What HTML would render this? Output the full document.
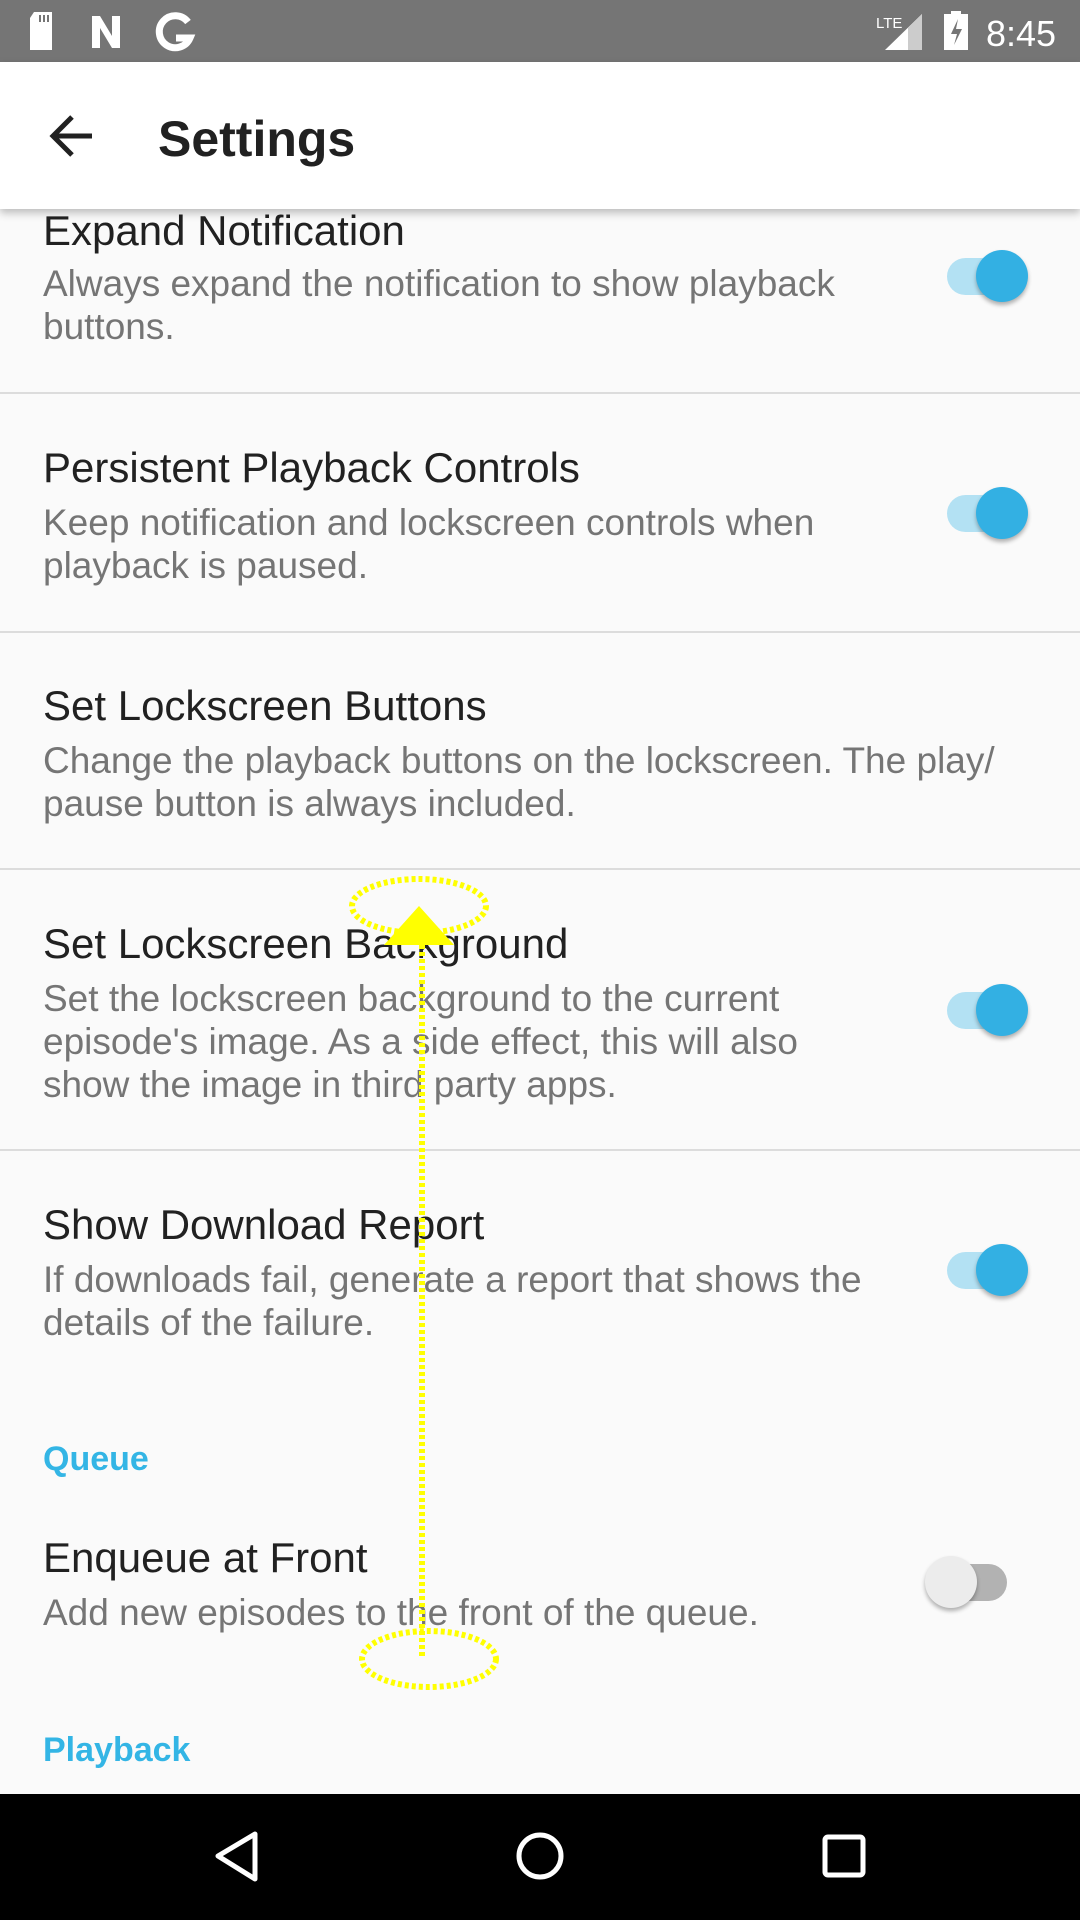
<!DOCTYPE html>
<html><head><meta charset="utf-8"><style>
*{margin:0;padding:0;box-sizing:border-box}
body{width:1080px;height:1920px;position:relative;overflow:hidden;background:#fafafa;font-family:"Liberation Sans",sans-serif}
.a{position:absolute;white-space:nowrap}
.t{font-size:42px;line-height:42px;color:#212121;left:43px}
.s{font-size:37px;line-height:43px;color:#757575;left:43px}
.h{font-size:34px;line-height:34px;color:#33b5e5;font-weight:bold;left:43px}
.d{position:absolute;left:0;width:1080px;height:2px;background:#dcdcdc}
.tr{position:absolute;width:70px;height:37px;border-radius:19px;background:#b3e1f3}
.kn{position:absolute;width:52px;height:52px;border-radius:50%;background:#33b0e3;box-shadow:0 3px 4px rgba(0,0,0,.3)}
</style></head><body>
<div class="a" style="left:0;top:0;width:1080px;height:62px;background:#757575"></div>
<svg class="a" style="left:0;top:0" width="1080" height="62">
<path d="M34 12h18v38H30V18z" fill="#fff"/><path d="M40 15v7M44 15v7M48 15v7" stroke="#757575" stroke-width="2"/>
<path d="M92 16v32h8V28l12 20h8V16h-8v20L100 16z" fill="#fff"/>
<path d="M188 22a16 16 0 1 0 2 16h-14" stroke="#fff" stroke-width="7" fill="none"/>
<text x="876" y="28" font-family="Liberation Sans" font-size="15" fill="#fff">LTE</text>
<path d="M885 50L922 14v36z" fill="#fff"/><path d="M908 28l14-14v36h-14z" fill="#ccc"/>
<rect x="944" y="14" width="24" height="36" fill="#fff"/><rect x="951" y="11" width="10" height="4" fill="#fff"/>
<path d="M958 19l-7 15h6l-3 11 8-16h-6z" fill="#757575"/>
<text x="986" y="46" font-family="Liberation Sans" font-size="36" fill="#fff">8:45</text>
</svg>
<div class="a" style="left:0;top:62px;width:1080px;height:147px;background:#fff;box-shadow:0 4px 8px rgba(0,0,0,.25);z-index:2"></div>
<svg class="a" style="left:48px;top:113px;z-index:3" width="50" height="46"><path d="M44 23H6M24 4L5 23l19 19" stroke="#212121" stroke-width="5" fill="none"/></svg>
<div class="a" style="left:158px;top:114px;font-size:50px;line-height:50px;color:#212121;font-weight:bold;z-index:3">Settings</div>

<div class="a t" style="top:210px">Expand Notification</div>
<div class="a s" style="top:262px">Always expand the notification to show playback<br>buttons.</div>
<div class="d" style="top:392px"></div>
<div class="a t" style="top:447px">Persistent Playback Controls</div>
<div class="a s" style="top:501px">Keep notification and lockscreen controls when<br>playback is paused.</div>
<div class="d" style="top:631px"></div>
<div class="a t" style="top:685px">Set Lockscreen Buttons</div>
<div class="a s" style="top:739px">Change the playback buttons on the lockscreen. The play/<br>pause button is always included.</div>
<div class="d" style="top:868px"></div>
<div class="a t" style="top:923px">Set Lockscreen Background</div>
<div class="a s" style="top:977px">Set the lockscreen background to the current<br>episode's image. As a side effect, this will also<br>show the image in third party apps.</div>
<div class="d" style="top:1149px"></div>
<div class="a t" style="top:1204px">Show Download Report</div>
<div class="a s" style="top:1258px">If downloads fail, generate a report that shows the<br>details of the failure.</div>
<div class="a h" style="top:1442px">Queue</div>
<div class="a t" style="top:1537px">Enqueue at Front</div>
<div class="a s" style="top:1591px">Add new episodes to the front of the queue.</div>
<div class="a h" style="top:1733px">Playback</div>

<div class="tr" style="left:947px;top:258px"></div><div class="kn" style="left:976px;top:250px"></div>
<div class="tr" style="left:947px;top:495px"></div><div class="kn" style="left:976px;top:487px"></div>
<div class="tr" style="left:947px;top:992px"></div><div class="kn" style="left:976px;top:984px"></div>
<div class="tr" style="left:947px;top:1252px"></div><div class="kn" style="left:976px;top:1244px"></div>
<div class="tr" style="left:937px;top:1564px;background:#b2b2b2"></div><div class="kn" style="left:925px;top:1556px;background:#ececec"></div>

<svg class="a" style="left:0;top:0;z-index:4" width="1080" height="1920">
<g stroke="#ffff00" stroke-width="6" stroke-dasharray="4 3" fill="none">
<ellipse cx="419" cy="906" rx="67" ry="27"/>
<ellipse cx="429" cy="1659" rx="67" ry="28"/>
<path d="M422 945V1656"/>
</g>
<path d="M419 906L384 945h70z" fill="#ffff00"/>
</svg>

<div class="a" style="left:0;top:1794px;width:1080px;height:126px;background:#000"></div>
<svg class="a" style="left:0;top:1794px" width="1080" height="126">
<path d="M255 40v45L218 62z" stroke="#fff" stroke-width="5" fill="none" stroke-linejoin="round"/>
<circle cx="540" cy="62" r="21" stroke="#fff" stroke-width="5" fill="none"/>
<rect x="825" y="43" width="38" height="38" rx="3" stroke="#fff" stroke-width="5" fill="none"/>
</svg>
</body></html>
